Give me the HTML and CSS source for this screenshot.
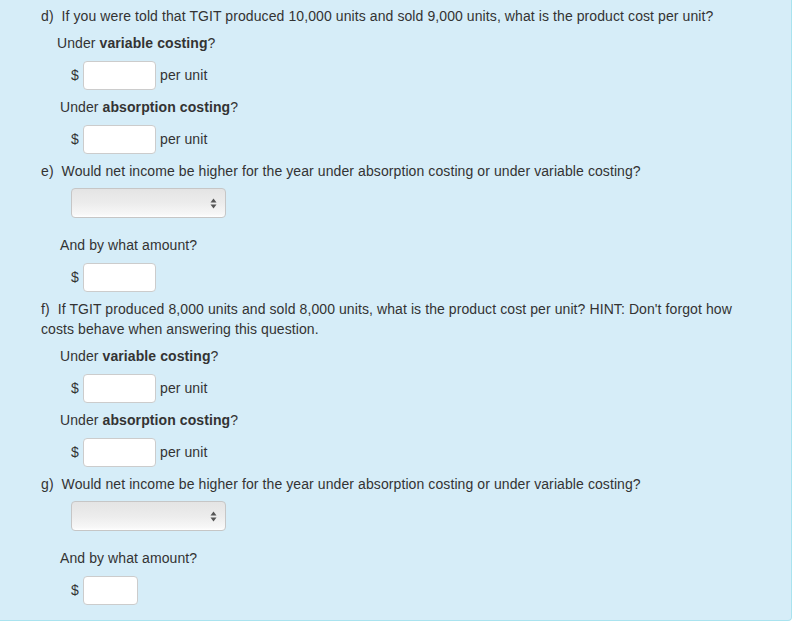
FILE: index.html
```html
<!DOCTYPE html>
<html>
<head>
<meta charset="utf-8">
<link rel="stylesheet" href="styles.css">
</head>
<body>
<div class="panel">
  <p class="q">d)&nbsp; If you were told that TGIT produced 10,000 units and sold 9,000 units, what is the product cost per unit?</p>
  <p class="sub sub-tight">Under <b>variable costing</b>?</p>
  <div class="row"><span class="cur">$</span><span class="field"></span><span class="unit">per unit</span></div>
  <p class="sub">Under <b>absorption costing</b>?</p>
  <div class="row"><span class="cur">$</span><span class="field"></span><span class="unit">per unit</span></div>
  <p class="q">e)&nbsp; Would net income be higher for the year under absorption costing or under variable costing?</p>
  <div class="select"><svg class="arrows" width="7" height="11" viewBox="0 0 7 11"><path d="M3.5 0.5 L6.5 4.5 L0.5 4.5 Z M3.5 10.5 L6.5 6.5 L0.5 6.5 Z" fill="#555"/></svg></div>
  <p class="sub">And by what amount?</p>
  <div class="row"><span class="cur">$</span><span class="field"></span></div>
  <p class="q">f)&nbsp; If TGIT produced 8,000 units and sold 8,000 units, what is the product cost per unit? HINT: Don't forgot how costs behave when answering this question.</p>
  <p class="sub">Under <b>variable costing</b>?</p>
  <div class="row"><span class="cur">$</span><span class="field"></span><span class="unit">per unit</span></div>
  <p class="sub">Under <b>absorption costing</b>?</p>
  <div class="row"><span class="cur">$</span><span class="field"></span><span class="unit">per unit</span></div>
  <p class="q">g)&nbsp; Would net income be higher for the year under absorption costing or under variable costing?</p>
  <div class="select"><svg class="arrows" width="7" height="11" viewBox="0 0 7 11"><path d="M3.5 0.5 L6.5 4.5 L0.5 4.5 Z M3.5 10.5 L6.5 6.5 L0.5 6.5 Z" fill="#555"/></svg></div>
  <p class="sub">And by what amount?</p>
  <div class="row"><span class="cur">$</span><span class="field field-small"></span></div>
</div>
</body>
</html>
```
FILE: styles.css
```css
html, body {
  margin: 0;
  padding: 0;
  background: #ffffff;
}
body {
  font-family: "Liberation Sans", Arial, Helvetica, sans-serif;
  font-size: 14px;
  line-height: 20px;
  letter-spacing: 0.09px;
  color: #333333;
}
.panel {
  width: 750px;
  background: #d6edf8;
  border-right: 1px solid #a9e3ef;
  border-bottom: 1px solid #a9e3ef;
  border-bottom-right-radius: 4px;
  padding: 6px 0 16px 41px;
  display: flex;
  flex-direction: column;
  align-items: flex-start;
}
.panel > * {
  margin: 8px 0 0 0;
}
.panel > *:first-child {
  margin-top: 0;
}
.q {
  width: 700px;
}
.q + .sub,
.q + .select {
  margin-top: 7px;
}
.select + .sub {
  margin-top: 17px;
}
.sub {
  padding-left: 19px;
}
.sub-tight {
  padding-left: 16px;
}
b {
  font-weight: bold;
}
.row {
  display: flex;
  align-items: center;
  padding-left: 30px;
  height: 28px;
}
.cur {
  width: 12px;
}
.field {
  box-sizing: border-box;
  width: 73px;
  height: 29px;
  background: #ffffff;
  border: 1px solid #cccccc;
  border-radius: 4px;
}
.field-small {
  width: 55px;
}
.unit {
  margin-left: 4px;
}
.select {
  box-sizing: border-box;
  margin-left: 30px;
  width: 155px;
  height: 30px;
  border: 1px solid #c6c6c6;
  border-radius: 4px;
  background: linear-gradient(to bottom, #e4e4e4 0%, #ececec 50%, #f7f7f7 90%, #ffffff 100%);
  display: flex;
  align-items: center;
  justify-content: flex-end;
  padding-right: 8px;
}
.arrows {
  display: block;
}
```
